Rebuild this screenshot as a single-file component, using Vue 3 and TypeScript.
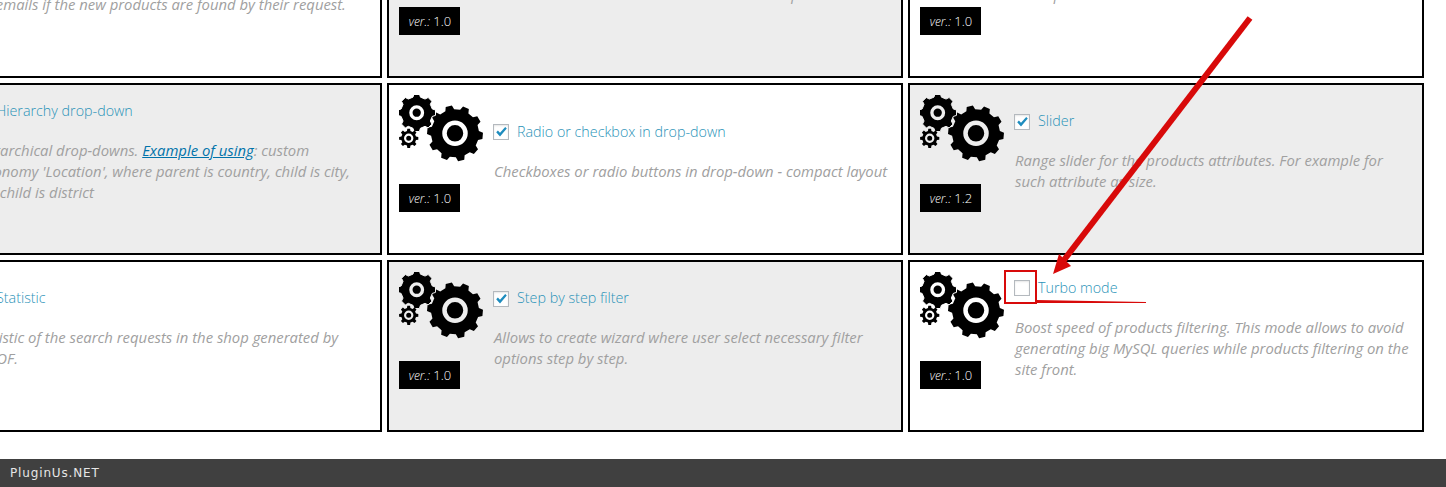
<template>
  <div class="page">
    <div class="scroller">
      <div class="grid">
        <div
          v-for="(ext, i) in extensions"
          :key="ext.title"
          class="card"
          :class="{ shaded: i % 2 === 1 }"
        >
          <div class="side">
            <svg class="gears" width="86" height="80" viewBox="0 0 86 80">
              <path :d="gearBig" fill="#000" />
              <circle cx="56" cy="38.3" r="10.5" fill="none" stroke="currentColor" stroke-width="4.5" />
              <path :d="gearMid" fill="#000" stroke="currentColor" stroke-width="1" />
              <circle cx="17.7" cy="17.7" r="5.8" fill="none" stroke="currentColor" stroke-width="3.3" />
              <path :d="gearSmall" fill="#000" />
              <circle cx="9.7" cy="43.3" r="3.6" fill="none" stroke="currentColor" stroke-width="2.2" />
            </svg>
            <div class="version"><i>ver.:</i> {{ ext.version }}</div>
          </div>
          <div class="body">
            <div class="head">
              <span class="box">
                <svg v-if="ext.on" width="14" height="14" viewBox="0 0 14 14">
                  <path d="M2.2 7.2 L3.9 5.6 L6 7.7 L11.2 2 L12.8 3.5 L6 11.4 Z" fill="#1e8cbe" />
                </svg>
              </span>
              <span class="title">{{ ext.title }}</span>
            </div>
            <p class="desc">
              {{ ext.before }}<a v-if="ext.link" href="#" class="link">{{ ext.link }}</a>{{ ext.after }}
            </p>
          </div>
        </div>
      </div>
    </div>
    <footer class="footer">PluginUs.NET</footer>

    <svg class="notes" width="1446" height="487" viewBox="0 0 1446 487">
      <line x1="1250" y1="18" x2="1064" y2="260" stroke="#d80a0a" stroke-width="6" />
      <polygon points="1053,274 1059,254 1071,266" fill="#d80a0a" />
      <rect x="1005" y="271" width="31" height="32" fill="none" stroke="#d80a0a" stroke-width="2" />
      <polygon points="1036,300 1146,302 1146,303 1036,303" fill="#d80a0a" />
    </svg>
  </div>
</template>

<script setup lang="ts">
interface Extension {
  title: string
  version: string
  on: boolean
  before: string
  link?: string
  after?: string
}

const extensions: Extension[] = [
  { title: 'Products Messenger', version: '1.0', on: true, before: 'Allows users to subscribe on search results and get notified via emails if the new products are found by their request.' },
  { title: 'Quick search', version: '1.0', on: true, before: 'Search on the site with instant results and all products' },
  { title: 'Save search query', version: '1.0', on: true, before: 'Allow products to be saved as a list' },
  { title: 'Hierarchy drop-down', version: '1.0', on: true, before: 'Hierarchical drop-downs. ', link: 'Example of using', after: ": custom taxonomy 'Location', where parent is country, child is city, city-child is district" },
  { title: 'Radio or checkbox in drop-down', version: '1.0', on: true, before: 'Checkboxes or radio buttons in drop-down - compact layout' },
  { title: 'Slider', version: '1.2', on: true, before: 'Range slider for the products attributes. For example for such attribute as size.' },
  { title: 'Statistic', version: '1.0', on: true, before: 'Statistic of the search requests in the shop generated by WOOF.' },
  { title: 'Step by step filter', version: '1.0', on: true, before: 'Allows to create wizard where user select necessary filter options step by step.' },
  { title: 'Turbo mode', version: '1.0', on: false, before: 'Boost speed of products filtering. This mode allows to avoid generating big MySQL queries while products filtering on the site front.' },
]

// cog outline with trapezoid teeth
const gear = (cx: number, cy: number, inner: number, outer: number, teeth: number, rot = 0): string => {
  const step = (Math.PI * 2) / teeth
  const pts: string[] = []
  for (let t = 0; t < teeth; t++) {
    const a = t * step + rot
    const corners: [number, number][] = [
      [a - step * 0.3, inner],
      [a - step * 0.18, outer],
      [a + step * 0.18, outer],
      [a + step * 0.3, inner],
    ]
    for (const [ang, r] of corners) {
      pts.push(`${(cx + Math.cos(ang) * r).toFixed(2)} ${(cy + Math.sin(ang) * r).toFixed(2)}`)
    }
  }
  return `M${pts.join(' L')} Z`
}

const gearBig = gear(56, 38.3, 24, 28, 10, 0.09)
const gearMid = gear(17.7, 17.7, 16, 19, 8, 0)
const gearSmall = gear(9.7, 43.3, 7.5, 9.7, 8, 0)
</script>

<style>
html,
body {
  margin: 0;
  overflow: hidden;
}
</style>

<style scoped>
.page {
  position: relative;
  height: 487px;
  display: flex;
  flex-direction: column;
  overflow: hidden;
  background: #fff;
  font-family: "Open Sans", sans-serif;
}
.scroller {
  flex: 1;
  overflow: hidden;
}
.grid {
  display: grid;
  grid-template-columns: repeat(3, 516px);
  grid-auto-rows: 172px;
  gap: 5px;
  margin: -94px 0 0 -134px;
}
.card {
  box-sizing: border-box;
  border: 2px solid #000;
  padding: 10px;
  display: flex;
  gap: 9px;
  background: #fff;
  color: #fff;
}
.card.shaded {
  background: #ededed;
  color: #ededed;
}
.side {
  width: 85px;
  flex: none;
}
.gears {
  display: block;
  margin-bottom: 9px;
}
.version {
  box-sizing: border-box;
  width: 61px;
  height: 28px;
  padding-left: 1px;
  background: #000;
  color: #fff;
  font-size: 13px;
  font-weight: 300;
  line-height: 28px;
  text-align: center;
}
.version i {
  font-size: 12px;
}
.body {
  flex: 1;
  min-width: 0;
  height: 113px;
  display: flex;
  flex-direction: column;
  justify-content: center;
}
.head {
  display: flex;
  align-items: center;
  gap: 8px;
  height: 21px;
  margin-bottom: 18px;
}
.box {
  box-sizing: border-box;
  width: 16px;
  height: 16px;
  flex: none;
  border: 1px solid #b4b9be;
  background: #fff;
  box-shadow: inset 0 1px 2px rgba(0, 0, 0, 0.1);
  display: flex;
  align-items: center;
  justify-content: center;
}
.title {
  margin-top: -2px;
  font-size: 14.3px;
  font-weight: 300;
  color: #2b93b8;
  white-space: nowrap;
}
.desc {
  margin: 0;
  padding-left: 1px;
  font-size: 14.85px;
  font-style: italic;
  line-height: 21px;
  color: #a0a0a0;
}
.link {
  color: #0073aa;
  text-decoration: underline;
}
.footer {
  height: 28px;
  flex: none;
  background: #404040;
  color: #e6e6e6;
  font-family: "DejaVu Sans", sans-serif;
  font-size: 12px;
  line-height: 28px;
  padding-left: 10px;
  letter-spacing: 0.85px;
}
.notes {
  position: absolute;
  top: 0;
  left: 0;
  pointer-events: none;
}
</style>
